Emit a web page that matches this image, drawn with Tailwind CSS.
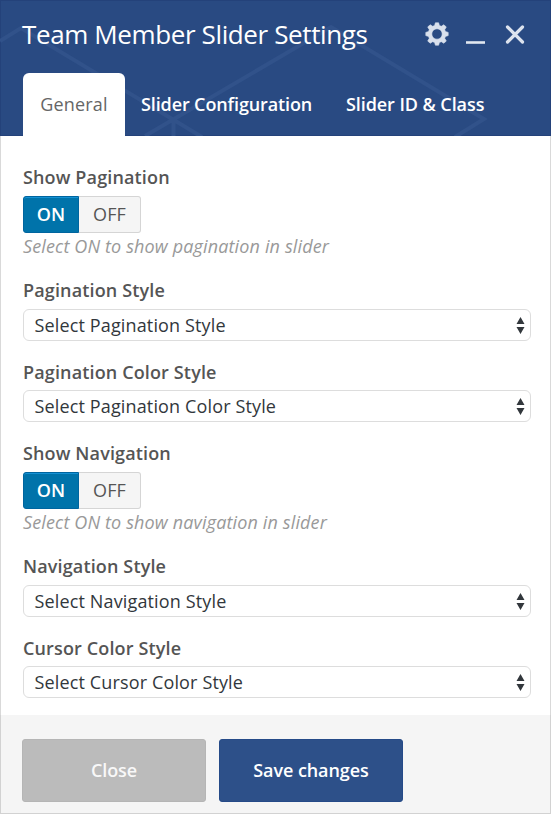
<!DOCTYPE html>
<html lang="en">
<head>
<meta charset="utf-8">
<title>Team Member Slider Settings</title>
<script src="https://cdn.jsdelivr.net/npm/@tailwindcss/browser@4"></script>
</head>
<body class="w-[551px] h-[814px] overflow-hidden bg-white font-['Open_Sans',sans-serif] text-[18px]">
<div class="w-[551px] h-[814px] flex flex-col">
  <header class="relative h-[136px] shrink-0 bg-[#294a82] border border-[#24427a] flex flex-col justify-between px-[22px]">
    <svg class="absolute -left-px -top-px" width="551" height="136" fill="none" stroke="#31528a" stroke-width="4"><path d="M0 41L21 28L202 137M145 136L331 27L484 119L455 137M173.500 119V136"/></svg>
    <div class="relative flex items-center h-[66px]">
      <h1 class="text-[26px] leading-[36px] text-white whitespace-nowrap w-[402px] -ml-px mr-px tracking-[-0.38px]">Team Member Slider Settings</h1>
      <svg class="shrink-0" width="24" height="24" viewBox="-12 -12 24 24" fill="#d9e0ec"><path fill-rule="evenodd" stroke="#d9e0ec" stroke-width=".6" stroke-linejoin="round" d="M-1.600 -11.200H1.600L2.400 -8.500L4.300 -7.700L6.900 -9.300L9.300 -6.900L7.700 -4.300L8.500 -2.400L11.200 -1.600V1.600L8.500 2.400L7.700 4.300L9.300 6.900L6.900 9.300L4.300 7.700L2.400 8.500L1.600 11.200H-1.600L-2.400 8.500L-4.300 7.700L-6.900 9.300L-9.300 6.900L-7.700 4.300L-8.500 2.400L-11.200 1.600V-1.600L-8.500 -2.400L-7.700 -4.300L-9.300 -6.900L-6.900 -9.300L-4.300 -7.700L-2.400 -8.500ZM0 -5.200A5.200 5.200 0 1 0 0 5.200A5.200 5.200 0 1 0 0 -5.200Z"/></svg>
      <svg class="ml-[17px] shrink-0" width="19" height="20"><path d="M0 18.500H19" stroke="#e1e7f0" stroke-width="2.600"/></svg>
      <svg class="ml-[20px] shrink-0" width="20" height="20"><path d="M2.500 3L17.500 18M17.500 3L2.500 18" stroke="#dce3ee" stroke-width="3.200" stroke-linecap="round"/></svg>
    </div>
    <nav class="relative flex h-[63px] -mb-px text-white font-semibold leading-[62px] whitespace-nowrap">
      <a class="w-[102px] shrink-0 rounded-t-[6px] bg-white text-center font-normal text-[#666] tracking-[0.15px]">General</a>
      <a class="ml-[16px] w-[205px] shrink-0 tracking-[-0.12px]">Slider Configuration</a>
      <a class="tracking-[-0.08px]">Slider ID &amp; Class</a>
    </nav>
  </header>
  <main class="h-[579px] shrink-0 border-x border-[#d9d9d9] px-[22px] pt-[30px] text-[#555] whitespace-nowrap tracking-[0.14px]">
    <section class="h-[113px]">
      <h2 class="h-6 leading-[22px] font-semibold">Show Pagination</h2>
      <div class="mt-[6px] flex w-[118px] h-[37px] text-center leading-[35px]">
        <span class="w-[56px] rounded-l-[3px] border border-[#00659f] bg-[#0073aa] text-white font-semibold shadow-[inset_0_1px_0_#1591d4]">ON</span>
        <span class="w-[62px] rounded-r-[3px] border border-l-0 border-[#d5d5d5] bg-[#f5f5f5]">OFF</span>
      </div>
      <p class="h-[26px] leading-[26px] italic text-[#999]">Select ON to show pagination in slider</p>
    </section>
    <section class="h-[81px]">
      <h2 class="h-6 leading-[22px] font-semibold">Pagination Style</h2>
      <div class="mt-[6px] h-[32px] w-[508px] rounded-[6px] border border-[#ddd] flex items-center justify-between pl-[10.5px] pr-[5px] text-[#32373c]"><span>Select Pagination Style</span><svg width="9" height="17" fill="#32373c"><path d="M4.500 0L8.500 7H.5ZM4.500 17L.5 10H8.500Z"/></svg></div>
    </section>
    <section class="h-[82px]">
      <h2 class="h-6 leading-6 font-semibold">Pagination Color Style</h2>
      <div class="mt-[6px] h-[32px] w-[508px] rounded-[6px] border border-[#ddd] flex items-center justify-between pl-[10.5px] pr-[5px] text-[#32373c]"><span>Select Pagination Color Style</span><svg width="9" height="17" fill="#32373c"><path d="M4.500 0L8.500 7H.5ZM4.500 17L.5 10H8.500Z"/></svg></div>
    </section>
    <section class="h-[113px]">
      <h2 class="h-6 leading-[22px] font-semibold">Show Navigation</h2>
      <div class="mt-[6px] flex w-[118px] h-[37px] text-center leading-[35px]">
        <span class="w-[56px] rounded-l-[3px] border border-[#00659f] bg-[#0073aa] text-white font-semibold shadow-[inset_0_1px_0_#1591d4]">ON</span>
        <span class="w-[62px] rounded-r-[3px] border border-l-0 border-[#d5d5d5] bg-[#f5f5f5]">OFF</span>
      </div>
      <p class="h-[26px] leading-[26px] italic text-[#999]">Select ON to show navigation in slider</p>
    </section>
    <section class="h-[81px]">
      <h2 class="h-6 leading-[22px] font-semibold">Navigation Style</h2>
      <div class="mt-[6px] h-[32px] w-[508px] rounded-[6px] border border-[#ddd] flex items-center justify-between pl-[10.5px] pr-[5px] text-[#32373c]"><span>Select Navigation Style</span><svg width="9" height="17" fill="#32373c"><path d="M4.500 0L8.500 7H.5ZM4.500 17L.5 10H8.500Z"/></svg></div>
    </section>
    <section>
      <h2 class="h-6 leading-6 font-semibold">Cursor Color Style</h2>
      <div class="mt-[6px] h-[32px] w-[508px] rounded-[6px] border border-[#ddd] flex items-center justify-between pl-[10.5px] pr-[5px] text-[#32373c]"><span>Select Cursor Color Style</span><svg width="9" height="17" fill="#32373c"><path d="M4.500 0L8.500 7H.5ZM4.500 17L.5 10H8.500Z"/></svg></div>
    </section>
  </main>
  <footer class="h-[99px] shrink-0 border border-t-0 border-[#d2d2d2] bg-[#f5f5f5] pl-[21px] pt-[24px] flex gap-[13px] font-semibold text-white tracking-[-0.08px]">
    <button class="w-[184px] h-[63px] rounded-[3px] bg-[#bbb] border border-[#b5b5b5] text-[#f8f8f8]">Close</button>
    <button class="w-[184px] h-[63px] rounded-[3px] bg-[#2d5089] border border-[#254a88]">Save changes</button>
  </footer>
</div>
</body>
</html>
